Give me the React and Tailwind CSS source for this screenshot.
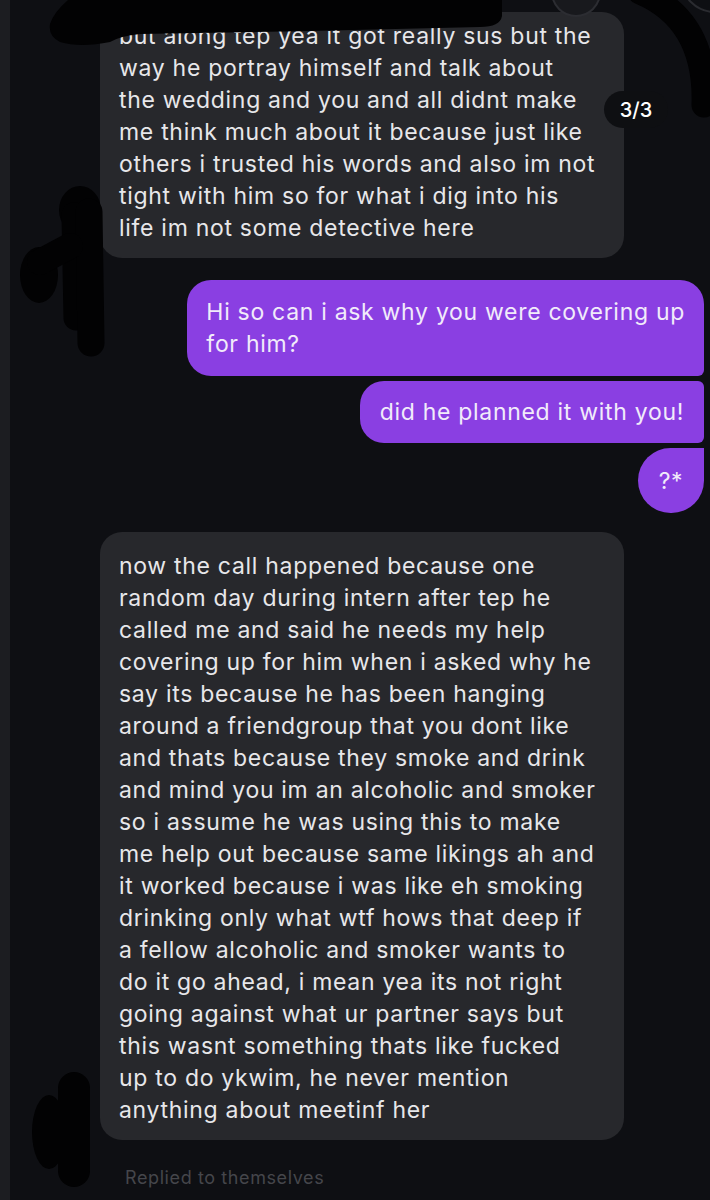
import React from 'react'

const firstReply = [
  'but along tep yea it got really sus but the',
  'way he portray himself and talk about',
  'the wedding and you and all didnt make',
  'me think much about it because just like',
  'others i trusted his words and also im not',
  'tight with him so for what i dig into his',
  'life im not some detective here',
]

const secondReply = [
  'now the call happened because one',
  'random day during intern after tep he',
  'called me and said he needs my help',
  'covering up for him when i asked why he',
  'say its because he has been hanging',
  'around a friendgroup that you dont like',
  'and thats because they smoke and drink',
  'and mind you im an alcoholic and smoker',
  'so i assume he was using this to make',
  'me help out because same likings ah and',
  'it worked because i was like eh smoking',
  'drinking only what wtf hows that deep if',
  'a fellow alcoholic and smoker wants to',
  'do it go ahead, i mean yea its not right',
  'going against what ur partner says but',
  'this wasnt something thats like fucked',
  'up to do ykwim, he never mention',
  'anything about meetinf her',
]

function Lines({ lines }) {
  return lines.map((line, i) => (
    <div key={i} className="whitespace-nowrap">
      {line}
    </div>
  ))
}

// grey incoming bubble
function TheirBubble({ lines, className = '' }) {
  return (
    <div
      className={`ml-[90px] w-[524px] rounded-[22px] bg-[#27282c] pl-[19px] pr-4 pb-[14px] text-[23px] leading-[32px] tracking-[0.7px] text-[#e7e7ea] ${className}`}
    >
      <Lines lines={lines} />
    </div>
  )
}

// black marker strokes drawn over the conversation
function Scribbles() {
  return (
    <svg
      className="pointer-events-none absolute inset-0"
      width="710"
      height="1200"
      viewBox="0 0 710 1200"
    >
      {/* reaction circles cut by the top edge */}
      <circle cx="566" cy="-8" r="24" fill="#18191d" stroke="#2c2d32" strokeWidth="2" />
      <circle cx="705" cy="-22" r="34" fill="none" stroke="#2a2b30" strokeWidth="2" />

      {/* top bar */}
      <path
        d="M58 0 L492 0 L492 16 Q490 27 470 27 L300 31 L130 34 Q110 36 100 42 Q70 48 50 42 Q38 36 40 24 Q44 12 58 0 Z"
        fill="#020203"
      />

      {/* right arc */}
      <path
        d="M630 -8 Q697 20 694 105"
        fill="none"
        stroke="#020203"
        strokeWidth="25"
        strokeLinecap="round"
      />

      {/* left mark */}
      <ellipse cx="70" cy="210" rx="21" ry="24" fill="#020203" />
      <path d="M64 215 L66 318" stroke="#020203" strokeWidth="25" strokeLinecap="round" />
      <path d="M79 212 L81 343" stroke="#020203" strokeWidth="27" strokeLinecap="round" />
      <ellipse cx="29" cy="275" rx="19" ry="28" fill="#020203" />
      <path d="M30 262 L60 246" stroke="#020203" strokeWidth="26" strokeLinecap="round" />

      {/* bottom mark */}
      <ellipse cx="39" cy="1132" rx="17" ry="37" fill="#020203" />
      <rect x="48" y="1072" width="32" height="115" rx="16" fill="#020203" />
    </svg>
  )
}

export default function App() {
  return (
    <div className="relative h-[1200px] w-[710px] overflow-hidden border-l-[10px] border-[#1c1d21] bg-[#0e0f13] font-['Inter','Liberation_Sans',sans-serif]">
      <div className="flex flex-col pt-[12px]">
        <TheirBubble lines={firstReply} className="pt-[8px]" />

        {/* outgoing messages */}
        <div className="mt-[22px] flex flex-col items-end gap-[5px] pr-[6px] text-[23px] leading-[32px] tracking-[0.7px] text-[#f1ebfa]">
          <div className="rounded-[24px] rounded-br-[6px] bg-[#8a3fe2] px-[19px] py-4">
            <Lines lines={['Hi so can i ask why you were covering up', 'for him?']} />
          </div>
          <div className="rounded-[24px] rounded-tr-[6px] rounded-br-[6px] bg-[#8a3fe2] px-[20px] py-[15px]">
            did he planned it with you!
          </div>
          <div className="flex h-[65px] w-[66px] items-center justify-center rounded-full rounded-tr-[6px] bg-[#8a3fe2]">
            ?*
          </div>
        </div>

        <TheirBubble lines={secondReply} className="mt-[19px] pt-[18px]" />

        <div className="ml-[115px] mt-[26px] text-[18px] leading-[24px] tracking-[0.6px] text-[#45464b]">
          Replied to themselves
        </div>
      </div>

      {/* carousel counter */}
      <div className="absolute left-[594px] top-[91px] flex h-[37px] w-[64px] items-center justify-center rounded-full bg-[#0e0f12] text-[20px] font-medium text-white">
        3/3
      </div>

      <Scribbles />
    </div>
  )
}
